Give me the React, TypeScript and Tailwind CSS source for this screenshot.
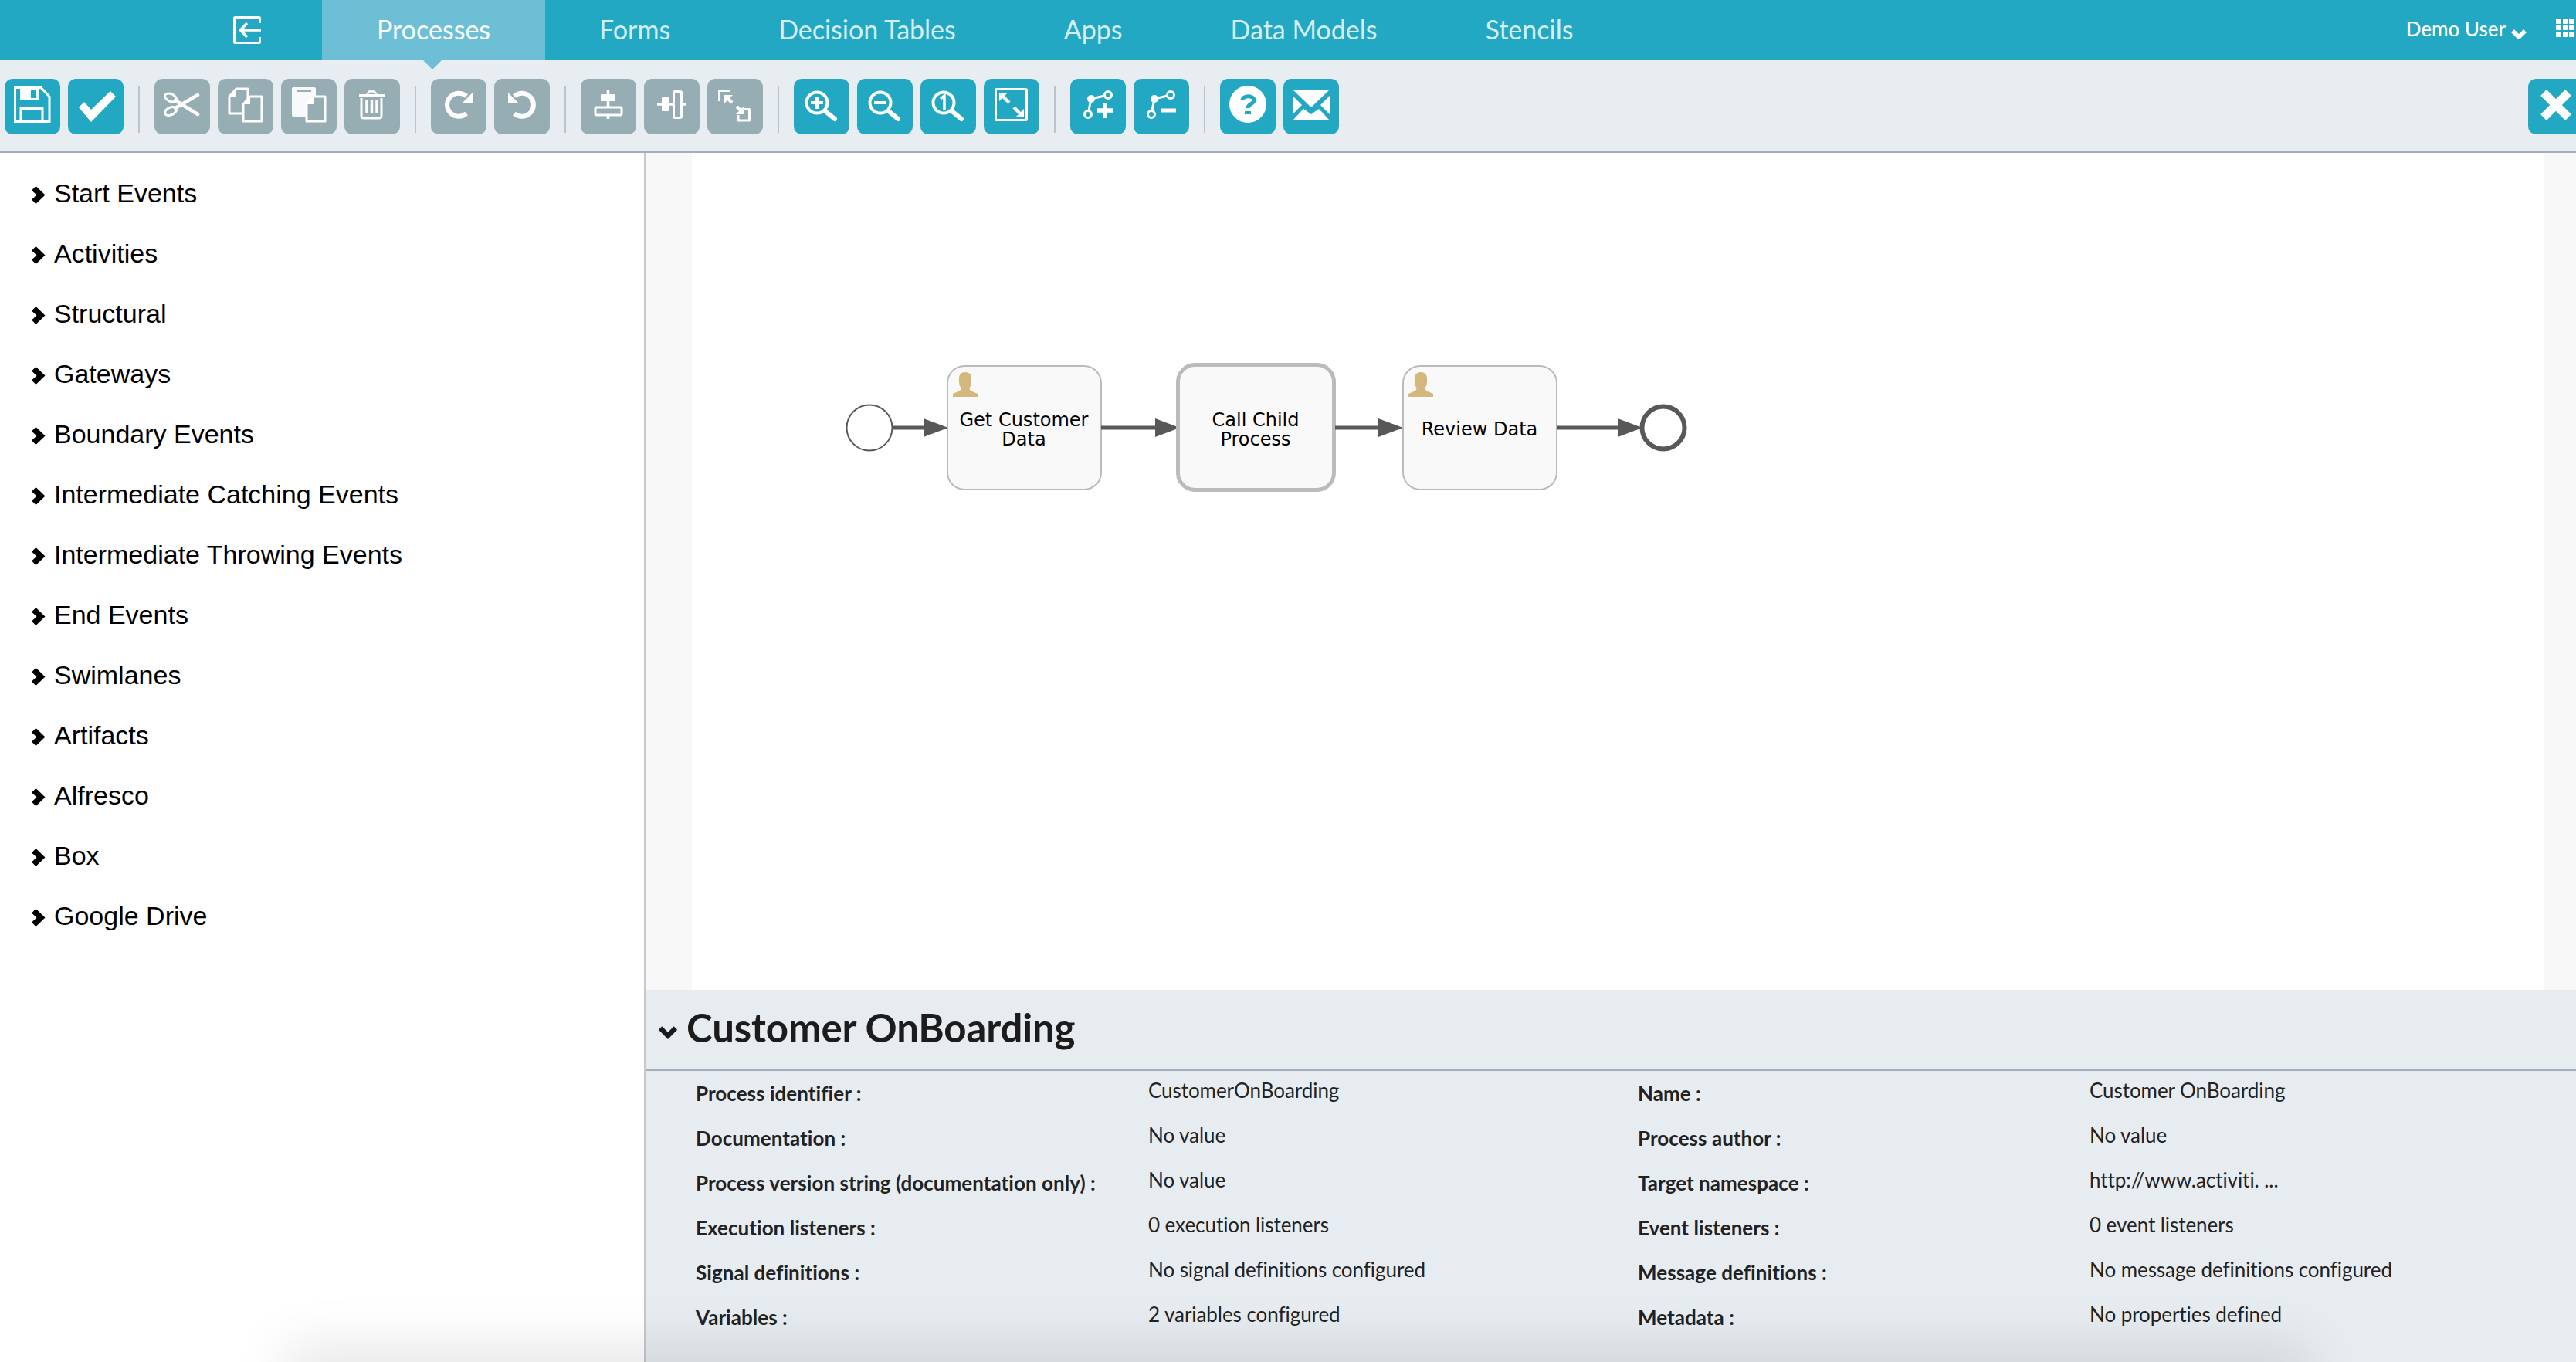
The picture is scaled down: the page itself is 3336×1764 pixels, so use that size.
import type { ReactNode } from 'react';

const BLUE = '#23a8c4';
const GRAY = '#95adb3';

function Tool({ tone = 'blue', children }: { tone?: 'blue' | 'gray'; children: ReactNode }) {
  return (
    <button className={`w-[72px] h-[72px] rounded-[10px] shrink-0 ${tone === 'blue' ? 'bg-[#23a8c4]' : 'bg-[#95adb3]'}`}>
      <svg viewBox="0 0 72 72" className="w-[72px] h-[72px] block" fill="none" stroke="#fff" strokeWidth="3">
        {children}
      </svg>
    </button>
  );
}

const Sep = () => <div className="w-[2px] h-[60px] mt-[10px] mx-[19px] bg-[#bcc5cc] shrink-0" />;

function Doc({ x, y, fill }: { x: number; y: number; fill?: string }) {
  return (
    <g fill={fill ?? 'none'}>
      <path d={`M${x + 9} ${y}H${x + 24}V${y + 32}H${x}V${y + 10}Z`} strokeLinejoin="round" />
      <path d={`M${x + 1} ${y + 10}H${x + 9}V${y + 1}Z`} fill="#fff" stroke="none" />
    </g>
  );
}

function Lens({ children }: { children: ReactNode }) {
  return (
    <>
      <circle cx="30" cy="31" r="13.5" strokeWidth="4" />
      <path d="M42 43L53 52" strokeWidth="6" strokeLinecap="round" />
      {children}
    </>
  );
}

function Arrow({ x1, y1, x2, y2 }: { x1: number; y1: number; x2: number; y2: number }) {
  // arrow with a filled head, tip at x2,y2
  const dx = Math.sign(x2 - x1);
  const dy = Math.sign(y2 - y1);
  return (
    <>
      <path d={`M${x1} ${y1}L${x2 - dx * 5} ${y2 - dy * 5}`} strokeWidth="4" />
      <path d={`M${x2} ${y2}L${x2 - dx * 11} ${y2}L${x2} ${y2 - dy * 11}Z`} fill="#fff" stroke="none" />
    </>
  );
}

function Toolbar() {
  return (
    <div className="h-[120px] pl-[6px] pt-[24px] flex bg-[#e8edf1] border-b-[2px] border-[#a4adb9]">
      <Tool>
        <path d="M13.5 11.5H47L58 23V55.5H13.5Z" />
        <path d="M20 11H44V27H20Z" fill="#fff" stroke="none" />
        <path d="M34 14H40V25H34Z" fill={BLUE} stroke="none" />
        <path d="M21 56V38.5H49V56" />
      </Tool>
      <div className="w-[10px] shrink-0" />
      <Tool>
        <path d="M14 37L21 30L30 40L55 16L62 23L30 56Z" fill="#fff" stroke="none" />
      </Tool>
      <Sep />
      <div className="flex gap-[10px]">
        <Tool tone="gray">
          <ellipse cx="21" cy="24.5" rx="8" ry="4.8" transform="rotate(25 21 24.5)" />
          <ellipse cx="21" cy="42" rx="8" ry="4.8" transform="rotate(-25 21 42)" />
          <path d="M27 28L56 46M27 38L56 21" strokeWidth="4.5" strokeLinecap="round" />
        </Tool>
        <Tool tone="gray">
          <Doc x={15} y={13} />
          <Doc x={33} y={23} fill={GRAY} />
        </Tool>
        <Tool tone="gray">
          <rect x="14" y="11" width="31" height="38" rx="2" fill="#f7f9fb" stroke="none" />
          <path d="M20 15.5H39" stroke={GRAY} strokeWidth="3" />
          <Doc x={33} y={23} fill={GRAY} />
        </Tool>
        <Tool tone="gray">
          <path d="M19 21.5H52" />
          <path d="M29 21L32 16.5H39L42 21" strokeWidth="2.5" />
          <path d="M22 25V48Q22 51 25 51H45Q48 51 48 48V25" />
          <path d="M29 28V44M35.5 28V44M42 28V44" strokeWidth="3.5" />
        </Tool>
      </div>
      <Sep />
      <div className="flex gap-[10px]">
        <Tool tone="gray">
          <path d="M46 45A15 15 0 1 1 46 22.500" strokeWidth="6" />
          <path d="M54 18V32H40Z" fill="#fff" stroke="none" />
        </Tool>
        <Tool tone="gray">
          <g transform="matrix(-1 0 0 1 72 0)">
            <path d="M46 45A15 15 0 1 1 46 22.500" strokeWidth="6" />
            <path d="M54 18V32H40Z" fill="#fff" stroke="none" />
          </g>
        </Tool>
      </div>
      <Sep />
      <div className="flex gap-[10px]">
        <Tool tone="gray">
          <path d="M35.500 15V52" strokeWidth="3.500" />
          <rect x="26" y="20" width="19" height="9" rx="1" fill="#fff" stroke="none" />
          <rect x="19" y="37" width="34" height="10" rx="1.500" fill={GRAY} />
        </Tool>
        <Tool tone="gray">
          <path d="M17 33H54" strokeWidth="3.500" />
          <rect x="23" y="24" width="9" height="18" rx="1" fill="#fff" stroke="none" />
          <rect x="38.500" y="16.500" width="10" height="34" rx="1.500" fill={GRAY} />
        </Tool>
        <Tool tone="gray">
          <path d="M29 15.500H15.500V29" strokeLinejoin="round" />
          <path d="M40 39.500H54.500V54H40V47" strokeLinejoin="round" />
          <Arrow x1={32} y1={31} x2={22} y2={21} />
          <Arrow x1={38} y1={36} x2={48} y2={46} />
        </Tool>
      </div>
      <Sep />
      <div className="flex gap-[10px]">
        <Tool>
          <Lens>
            <path d="M22 31H38M30 23V39" strokeWidth="4" />
          </Lens>
        </Tool>
        <Tool>
          <Lens>
            <path d="M22 31H38" strokeWidth="4" />
          </Lens>
        </Tool>
        <Tool>
          <Lens>
            <path d="M26 26L31 22V40" strokeWidth="3.500" />
          </Lens>
        </Tool>
        <Tool>
          <rect x="15.500" y="13.500" width="40" height="40" rx="1" />
          <Arrow x1={33} y1={31} x2={20} y2={18} />
          <Arrow x1={39} y1={37} x2={52} y2={50} />
        </Tool>
      </div>
      <Sep />
      <div className="flex gap-[10px]">
        <Tool>
          <path d="M27 26L49 21M27 26L23 46" />
          <circle cx="27" cy="26" r="5" fill="#fff" stroke="none" />
          <circle cx="49" cy="21" r="4.500" fill={BLUE} />
          <circle cx="23" cy="46" r="4.500" fill={BLUE} />
          <path d="M35 41H55M45 31V51" strokeWidth="5.500" />
        </Tool>
        <Tool>
          <path d="M27 26L48 21M27 26L23 46" />
          <circle cx="27" cy="26" r="5" fill="#fff" stroke="none" />
          <circle cx="48" cy="21" r="4.500" fill={BLUE} />
          <circle cx="23" cy="46" r="4.500" fill={BLUE} />
          <path d="M35 41H55" strokeWidth="5" />
        </Tool>
      </div>
      <Sep />
      <div className="flex gap-[10px]">
        <Tool>
          <circle cx="36" cy="33" r="24" fill="#fff" stroke="none" />
          <path d="M29 28C29 21 44 21 44 28C44 33 36 32 36 38" stroke={BLUE} strokeWidth="5" />
          <path d="M32 44H40" stroke={BLUE} strokeWidth="4" />
        </Tool>
        <Tool>
          <g fill="#fff" stroke="none">
            <path d="M12 14H60L36 37Z" />
            <path d="M12 22V46L24 34Z" />
            <path d="M60 22V46L48 34Z" />
            <path d="M12 54L26 39L36 46L46 39L60 54Z" />
          </g>
        </Tool>
      </div>
      <div className="flex-1" />
      <button className="w-[62px] h-[72px] rounded-l-[10px] bg-[#23a8c4] shrink-0 overflow-hidden">
        <svg viewBox="0 0 62 72" className="w-[62px] h-[72px] block">
          <path d="M20 18L52 50M52 18L20 50" stroke="#fff" strokeWidth="11" />
        </svg>
      </button>
    </div>
  );
}

const TABS = ['Forms', 'Decision Tables', 'Apps', 'Data Models', 'Stencils'];

function Header() {
  return (
    <header className="relative h-[78px] flex bg-[#23a8c4] font-[Lato,sans-serif]">
      <div className="w-[417px] shrink-0 pl-[302px] pt-[21px]">
        <svg viewBox="0 0 36 36" className="w-[36px] h-[36px]" fill="none" stroke="#fff" strokeWidth="3">
          <path d="M34.500 9V2.500Q34.500 1.500 33.500 1.500H2.500Q1.500 1.500 1.500 2.500V33.500Q1.500 34.500 2.500 34.500H33.500Q34.500 34.500 34.500 33.500V27" />
          <path d="M36 18H11M18 9L9.500 18L18 27" strokeWidth="3.500" />
        </svg>
      </div>
      <div className="relative px-[71px] bg-[#6cbfd5] text-white text-[34px] leading-[76px]">
        Processes
        <div className="absolute left-[131px] top-[78px] w-0 h-0 border-x-[12px] border-x-transparent border-t-[12px] border-t-[#6cbfd5]" />
      </div>
      {TABS.map((t) => (
        <div key={t} className="px-[70px] text-[#d5eef3] text-[34px] leading-[76px]">
          {t}
        </div>
      ))}
      <div className="flex-1" />
      <div className="flex items-start text-white text-[26px] leading-[74px] font-medium">
        Demo User
        <svg viewBox="0 0 20 14" className="w-[20px] h-[14px] ml-[7px] mt-[37px]">
          <path d="M2 3L10 11L18 3" fill="none" stroke="#fff" strokeWidth="5.500" />
        </svg>
      </div>
      <div className="ml-[38px] mr-[2px] mt-[24px] grid grid-cols-3 gap-[2px] w-[24px] h-[24px]">
        {Array.from({ length: 9 }).map((_, i) => (
          <div key={i} className="bg-white rounded-[1px]" />
        ))}
      </div>
    </header>
  );
}

const GROUPS = [
  'Start Events',
  'Activities',
  'Structural',
  'Gateways',
  'Boundary Events',
  'Intermediate Catching Events',
  'Intermediate Throwing Events',
  'End Events',
  'Swimlanes',
  'Artifacts',
  'Alfresco',
  'Box',
  'Google Drive',
];

function Sidebar() {
  return (
    <aside className="w-[836px] shrink-0 pt-[13px] border-r-[2px] border-[#c3c9cf] bg-white font-['Liberation_Sans',Arial,sans-serif]">
      {GROUPS.map((g) => (
        <div key={g} className="h-[78px] flex items-center pl-[41px] text-[34px] text-black">
          <svg viewBox="0 0 18 23" className="w-[18px] h-[23px] mt-[4px] mr-[11px] shrink-0">
            <path d="M0 5.500L5.500 0L17.500 11.500L5.500 23L0 17.500L6.500 11.500Z" fill="#000" />
          </svg>
          {g}
        </div>
      ))}
    </aside>
  );
}

function Person({ x }: { x: number }) {
  return (
    <path
      transform={`translate(${x} 482)`}
      d="M8 8C8 3 11 0 16 0C21 0 24 3 24 8V13C24 17 22 19 21.500 21C21.500 23 23 24 25 25L32 28V32H0V28L7 25C9 24 10.500 23 10.500 21C10 19 8 17 8 13Z"
      fill="#d4b77c"
    />
  );
}

function Flow({ x1, x2 }: { x1: number; x2: number }) {
  return (
    <>
      <path d={`M${x1} 554H${x2 - 28}`} stroke="#585858" strokeWidth="5" />
      <path d={`M${x2 - 32} 542L${x2} 554L${x2 - 32} 566Z`} fill="#585858" />
    </>
  );
}

function Canvas() {
  return (
    <div className="flex-1 min-h-0 flex bg-[#f8f8f8]">
      <div className="w-[60px] shrink-0" />
      <div className="flex-1 bg-white overflow-hidden">
        <svg
          viewBox="1090 465 1100 176"
          className="w-[1100px] h-[176px] ml-[194px] mt-[267px] font-['DejaVu_Sans',sans-serif]"
          fontSize="24"
          textAnchor="middle"
          fill="#000"
        >
          <circle cx="1126" cy="554" r="29.500" fill="#fff" stroke="#585858" strokeWidth="2" />
          <Flow x1={1156} x2={1228} />
          <rect x="1227" y="474" width="199" height="160" rx="22" fill="#f9f9f9" stroke="#bbb" strokeWidth="2" />
          <Person x={1234} />
          <text x="1326" y="552">Get Customer</text>
          <text x="1326" y="577">Data</text>
          <Flow x1={1426} x2={1528} />
          <rect x="1525.500" y="472.500" width="202" height="162" rx="22" fill="#f9f9f9" stroke="#bbb" strokeWidth="5" />
          <text x="1626" y="552">Call Child</text>
          <text x="1626" y="577">Process</text>
          <Flow x1={1729} x2={1817} />
          <rect x="1817" y="474" width="199" height="160" rx="22" fill="#f9f9f9" stroke="#bbb" strokeWidth="2" />
          <Person x={1824} />
          <text x="1916" y="564">Review Data</text>
          <Flow x1={2016} x2={2127} />
          <circle cx="2154" cy="554" r="27.500" fill="#fff" stroke="#585858" strokeWidth="6" />
        </svg>
      </div>
      <div className="w-[41px] shrink-0" />
    </div>
  );
}

const PROPS = [
  ['Process identifier :', 'CustomerOnBoarding', 'Name :', 'Customer OnBoarding'],
  ['Documentation :', 'No value', 'Process author :', 'No value'],
  ['Process version string (documentation only) :', 'No value', 'Target namespace :', 'http://www.activiti. ...'],
  ['Execution listeners :', '0 execution listeners', 'Event listeners :', '0 event listeners'],
  ['Signal definitions :', 'No signal definitions configured', 'Message definitions :', 'No message definitions configured'],
  ['Variables :', '2 variables configured', 'Metadata :', 'No properties defined'],
];

function Properties() {
  return (
    <section className="h-[482px] shrink-0 bg-[#e7ecf0] font-[Lato,sans-serif] text-[#222]">
      <div className="h-[105px] flex items-center pl-[16px] border-b-[2px] border-[#a4adb9]">
        <svg viewBox="0 0 28 20" className="w-[26px] h-[18px] mt-[6px] mr-[11px]">
          <path d="M3 4L14 15L25 4" fill="none" stroke="#1a1a1a" strokeWidth="7" />
        </svg>
        <h2 className="text-[51px] font-bold leading-none mb-[6px] text-[#1c1c1c] tracking-[-0.15px]">Customer OnBoarding</h2>
      </div>
      <div className="pl-[65px] grid grid-cols-[586px_634px_585px_1fr]">
        {PROPS.flat().map((cell, i) =>
          i % 2 === 0 ? (
            <div key={i} className="text-[26px] font-bold leading-[58px] h-[58px] whitespace-nowrap tracking-[0.05px]">
              {cell}
            </div>
          ) : (
            <div key={i} className="text-[26px] leading-[50px] h-[58px] whitespace-nowrap tracking-[-0.06px]">
              {cell}
            </div>
          ),
        )}
      </div>
    </section>
  );
}

export default function App() {
  return (
    <div className="relative w-[3336px] h-[1764px] overflow-hidden flex flex-col bg-white">
      <Header />
      <Toolbar />
      <div className="flex-1 min-h-0 flex">
        <Sidebar />
        <div className="flex-1 min-w-0 flex flex-col">
          <Canvas />
          <Properties />
        </div>
      </div>
      {/* shadow of the dialog that sits below the fold */}
      <div className="absolute left-[400px] top-[1774px] w-[2560px] h-[20px] shadow-[0_0_70px_30px_rgba(0,0,0,0.1)]" />
    </div>
  );
}
